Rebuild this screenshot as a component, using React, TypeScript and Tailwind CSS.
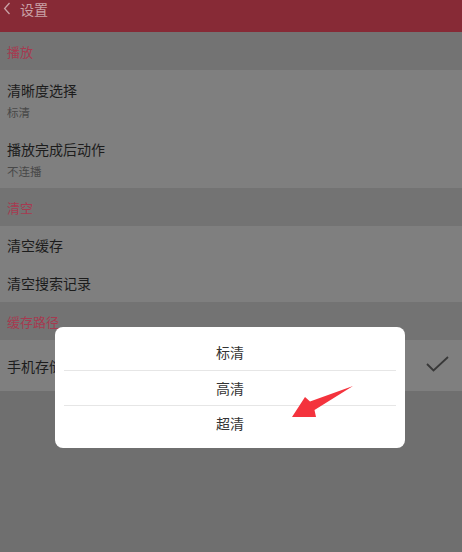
import React from "react";

const font = { fontFamily: '"Noto Sans CJK SC", "Noto Sans", sans-serif' };

function Section({ label }: { label: string }) {
  return (
    <div className="h-[38px] bg-[#737373] flex items-center px-[7px]">
      <span className="text-[13px] leading-none text-[#a63a50]">{label}</span>
    </div>
  );
}

function Item2({ title, sub }: { title: string; sub: string }) {
  return (
    <div className="h-[59px] bg-[#7f7f7f] px-[7px] pt-[10px]">
      <div className="text-[14px] leading-[20px] text-[#1c1c1c]">{title}</div>
      <div className="text-[11.5px] leading-[16px] mt-[4px] text-[#484848]">{sub}</div>
    </div>
  );
}

function Item1({ title }: { title: string }) {
  return (
    <div className="h-[38px] bg-[#7f7f7f] px-[7px] flex items-center">
      <span className="text-[14px] leading-none text-[#1c1c1c]">{title}</span>
    </div>
  );
}

export default function App() {
  return (
    <div className="relative w-[462px] h-[552px] overflow-hidden bg-[#6f6f6f]" style={font}>
      <div className="h-[32px] bg-[#872a36]">
        <div className="h-[18px] flex items-center gap-[9px] pl-[3px]">
          <svg width="8" height="13" viewBox="0 0 8 13" className="mt-[-1px]">
            <path d="M6.5 1 L1.6 6.5 L6.5 12" fill="none" stroke="#c9a2a7" strokeWidth="1.3" />
          </svg>
          <span className="text-[14px] leading-none text-[#c9a2a7]">设置</span>
        </div>
      </div>
      <Section label="播放" />
      <Item2 title="清晰度选择" sub="标清" />
      <Item2 title="播放完成后动作" sub="不连播" />
      <Section label="清空" />
      <Item1 title="清空缓存" />
      <Item1 title="清空搜索记录" />
      <Section label="缓存路径" />
      <div className="h-[51px] bg-[#7f7f7f] pl-[7px] flex items-center justify-between">
        <span className="text-[14px] leading-none text-[#1c1c1c]">手机存储</span>
        <svg width="26" height="20" viewBox="0 0 26 20" className="mr-[11px]">
          <path d="M2 8 L8.5 14.5 L23 1" fill="none" stroke="#383838" strokeWidth="1.8" />
        </svg>
      </div>

      <div className="absolute left-[55px] top-[327px] w-[350px] h-[121px] bg-white rounded-[8px] pt-[8px]">
        <div className="h-[35px] flex items-center justify-center text-[14px] text-[#333333]">标清</div>
        <div className="mx-[9px] h-[35px] border-t border-[#e6e6e6] flex items-center justify-center text-[14px] text-[#333333]">高清</div>
        <div className="mx-[9px] h-[35px] border-t border-[#e6e6e6] flex items-center justify-center text-[14px] text-[#333333]">超清</div>
      </div>

      <svg className="absolute left-0 top-0 pointer-events-none" width="462" height="552" viewBox="0 0 462 552">
        <polygon points="292,417 305,397 310,401.5 353,386 314.5,410 316,417" fill="#f4333d" />
      </svg>
    </div>
  );
}
